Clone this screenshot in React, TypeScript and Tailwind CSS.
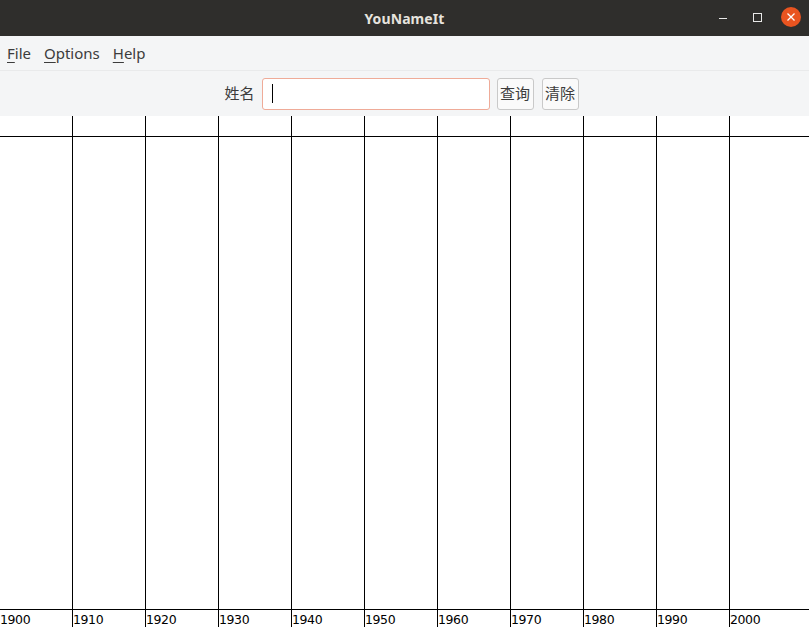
import React from "react";

const xs = [72, 145, 218, 291, 364, 437, 510, 583, 656, 729];
const years = [1900, 1910, 1920, 1930, 1940, 1950, 1960, 1970, 1980, 1990, 2000];

function Chart() {
  return (
    <svg width="809" height="511" className="block">
      <rect x="0" y="0" width="809" height="511" fill="#ffffff" />
      <line x1="0" y1="20.5" x2="809" y2="20.5" stroke="#000" strokeWidth="1" />
      <line x1="0" y1="493.5" x2="809" y2="493.5" stroke="#000" strokeWidth="1" />
      {xs.map((x) => (
        <line key={x} x1={x + 0.5} y1="0" x2={x + 0.5} y2="511" stroke="#000" strokeWidth="1" />
      ))}
      {years.map((y, i) => (
        <text
          key={y}
          x={i === 0 ? 0 : xs[i - 1] + 1}
          y="508"
          fontFamily="'DejaVu Sans', sans-serif"
          fontSize="12.5"
          letterSpacing="-0.4"
          fill="#000"
        >
          {y}
        </text>
      ))}
    </svg>
  );
}

export default function App() {
  const ui = { fontFamily: "'Noto Sans', 'Noto Sans CJK SC', sans-serif" };
  return (
    <div className="w-[809px] h-[627px] overflow-hidden flex flex-col bg-white" style={ui}>
      {/* Title bar */}
      <div className="relative h-[36px] bg-[#2f2e2c] flex items-center justify-center shrink-0">
        <span className="text-[#e6e3de] font-bold text-[14px] tracking-[0.1px]" style={{ fontFamily: "'Noto Sans', sans-serif" }}>
          YouNameIt
        </span>
        <div className="absolute left-[719px] top-[18px] w-[8px] h-[1px] bg-[#e8e8e8]" />
        <div className="absolute left-[753px] top-[13px] w-[9px] h-[9px] border border-[#e8e8e8]" />
        <div className="absolute left-[781px] top-[7px] w-[20px] h-[20px] rounded-full bg-[#e95420] flex items-center justify-center">
          <svg width="10" height="10" viewBox="0 0 10 10">
            <path d="M1.5 1.5 L8.5 8.5 M8.5 1.5 L1.5 8.5" stroke="#fff" strokeWidth="1.3" />
          </svg>
        </div>
      </div>
      {/* Menu bar */}
      <div className="h-[34px] bg-[#f4f5f6] flex items-center pl-[7px] gap-[13px] text-[15px] text-[#3c3c3c] shrink-0">
        <span>
          <span className="underline underline-offset-[3px] decoration-1">F</span>ile
        </span>
        <span>
          <span className="underline underline-offset-[3px] decoration-1">O</span>ptions
        </span>
        <span>
          <span className="underline underline-offset-[3px] decoration-1">H</span>elp
        </span>
      </div>
      <div className="h-[1px] bg-[#e9eaeb] shrink-0" />
      {/* Toolbar */}
      <div className="h-[45px] bg-[#f4f5f6] flex items-center justify-center pr-[6px] shrink-0">
        <span className="text-[15px] text-[#3c3c3c] mr-[7px]">姓名</span>
        <div className="w-[228px] h-[32px] bg-white border border-[#efab98] rounded-[3px] flex items-center pl-[9px]">
          <div className="w-[1px] h-[19px] bg-black" />
        </div>
        <button className="ml-[7px] w-[37px] h-[32px] border border-[#c9c9c9] bg-[#fafafa] rounded-[3px] text-[15px] text-[#3c3c3c] flex items-center justify-center">
          查询
        </button>
        <button className="ml-[8px] w-[37px] h-[32px] border border-[#c9c9c9] bg-[#fafafa] rounded-[3px] text-[15px] text-[#3c3c3c] flex items-center justify-center">
          清除
        </button>
      </div>
      {/* Chart */}
      <div className="flex-1 bg-white">
        <Chart />
      </div>
    </div>
  );
}
